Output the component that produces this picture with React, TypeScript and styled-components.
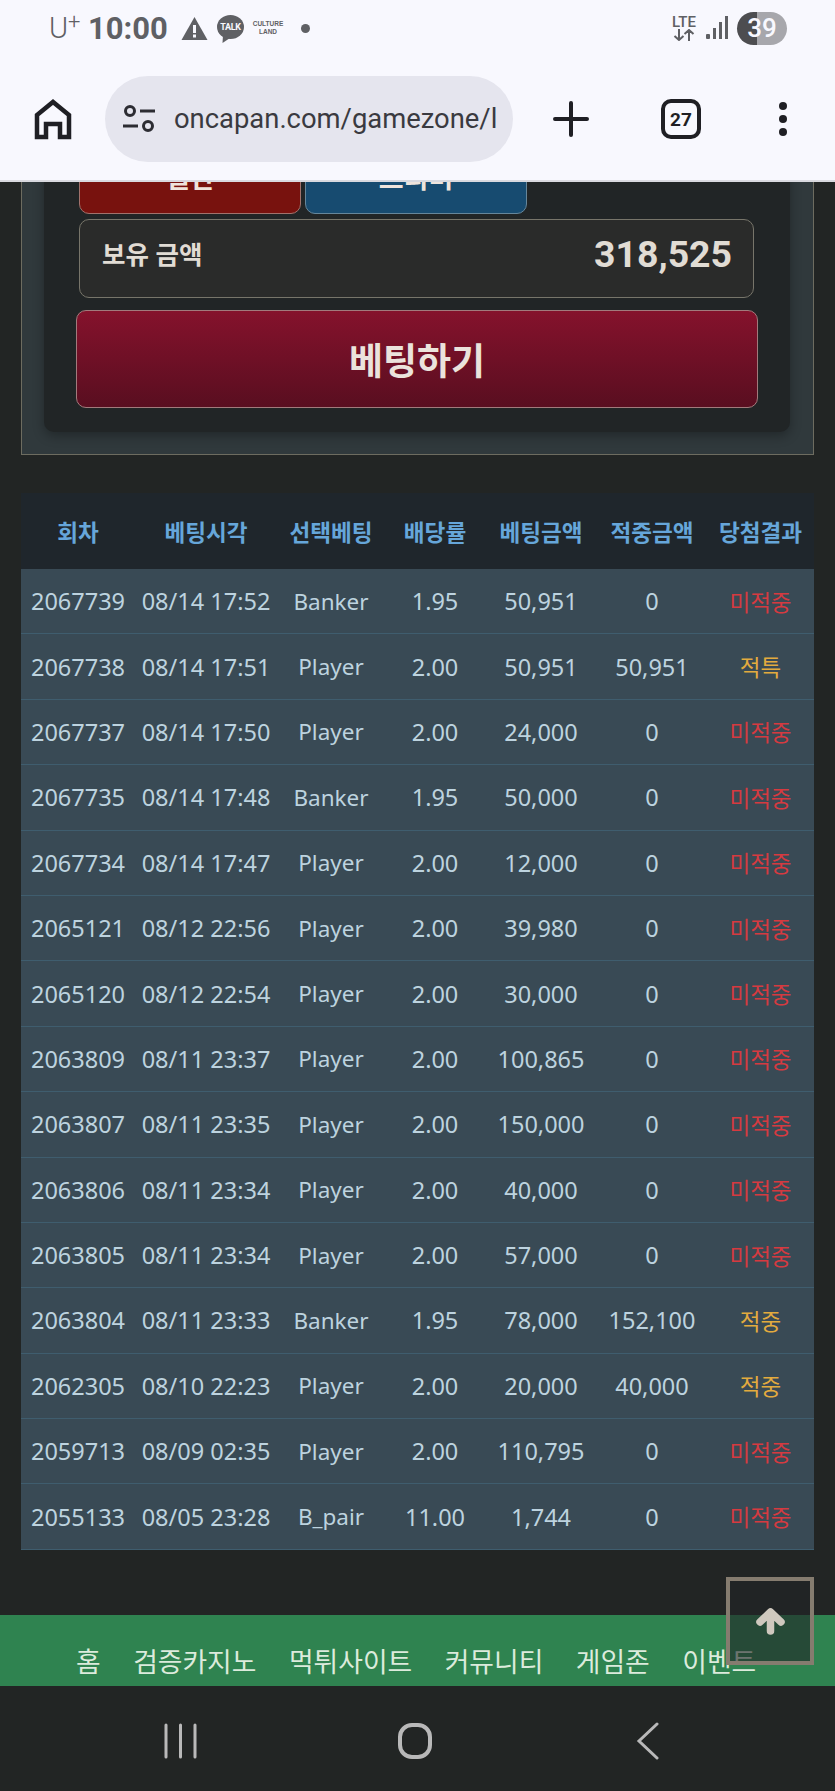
import styled, { createGlobalStyle } from 'styled-components';

const COLUMNS = '114px 142px 108px 100px 112px 110px 107px';
const KR_FONT = '"Noto Sans", "Noto Sans CJK KR", sans-serif';

const GlobalStyle = createGlobalStyle`
  * {
    box-sizing: border-box;
  }
  html, body {
    margin: 0;
    padding: 0;
    background: #222524;
  }
`;

const Screen = styled.div`
  position: relative;
  width: 835px;
  height: 1791px;
  overflow: hidden;
  display: flex;
  flex-direction: column;
  font-family: ${KR_FONT};
  background: #222524;
`;

const StatusBar = styled.div`
  height: 56px;
  flex: none;
  display: flex;
  align-items: center;
  padding: 0 48px 0 49px;
  background: #f8f8fe;
  color: #5f6064;
`;

const Carrier = styled.span`
  font-family: Roboto, sans-serif;
  font-size: 29px;
  font-weight: 300;
  width: 39px;
  > sup {
    font-size: 22px;
    line-height: 0;
    vertical-align: 9px;
  }
`;

const Clock = styled.span`
  font-family: Roboto, sans-serif;
  font-size: 31px;
  font-weight: 700;
  width: 93px;
`;

const TalkBubble = styled.div`
  position: relative;
  width: 27px;
  height: 27px;
  margin-left: 9px;
  display: flex;
  align-items: center;
  justify-content: center;
  > svg {
    position: absolute;
    inset: 0;
  }
  > span {
    position: relative;
    font-family: Roboto, sans-serif;
    font-size: 9px;
    font-weight: 700;
    color: #f8f8fe;
    margin-top: -2px;
    letter-spacing: -0.3px;
  }
`;

const CultureLand = styled.div`
  width: 32px;
  margin-left: 8px;
  text-align: center;
  font-family: "Liberation Sans", sans-serif;
  font-size: 6.5px;
  font-weight: 700;
  line-height: 8px;
  white-space: nowrap;
`;

const NoticeDot = styled.span`
  width: 9px;
  height: 9px;
  margin-left: 17px;
  border-radius: 50%;
  background: #5f6064;
`;

const StatusRight = styled.div`
  margin-left: auto;
  display: flex;
  align-items: center;
`;

const NetworkType = styled.div`
  width: 26px;
  margin-right: 9px;
  display: flex;
  flex-direction: column;
  align-items: center;
  font-family: Roboto, sans-serif;
  font-size: 15px;
  font-weight: 500;
  line-height: 14px;
`;

const Battery = styled.div`
  width: 50px;
  height: 33px;
  margin-left: 9px;
  border-radius: 17px;
  display: flex;
  align-items: center;
  justify-content: center;
  background: linear-gradient(90deg, #4d4d50 0 40%, #a7a7ac 40% 100%);
  font-family: Roboto, sans-serif;
  font-size: 26px;
  font-weight: 500;
  color: #f8f8fe;
`;

const BrowserBar = styled.div`
  height: 126px;
  flex: none;
  display: flex;
  align-items: center;
  padding: 2px 0 0 34px;
  background: #f8f8fe;
  border-bottom: 2px solid #d9d9df;
  color: #1f1f24;
`;

const UrlPill = styled.div`
  width: 408px;
  height: 86px;
  margin-left: 33px;
  margin-right: 40px;
  padding: 0 16px 0 18px;
  border-radius: 43px;
  display: flex;
  align-items: center;
  gap: 19px;
  background: #e5e5ee;
`;

const UrlText = styled.div`
  flex: 1;
  overflow: hidden;
  white-space: nowrap;
  font-family: Roboto, sans-serif;
  font-size: 27.4px;
  color: #3a3a40;
`;

const TabCount = styled.div`
  width: 40px;
  height: 40px;
  margin-left: 72px;
  margin-right: 78px;
  border: 4px solid #1f1f24;
  border-radius: 10px;
  display: flex;
  align-items: center;
  justify-content: center;
  font-family: Roboto, sans-serif;
  font-size: 19px;
  font-weight: 700;
`;

const MenuDots = styled.div`
  display: flex;
  flex-direction: column;
  gap: 5px;
  > span {
    width: 8px;
    height: 8px;
    border-radius: 50%;
    background: #1f1f24;
  }
`;

const Main = styled.div`
  flex: 1;
  min-height: 0;
  overflow: hidden;
  padding: 0 21px;
`;

const BetSection = styled.section`
  margin-top: -85px;
  padding: 20px 23px 22px 22px;
  border: 1px solid #6d6c60;
  background: #30393c;
`;

const BetPanel = styled.div`
  padding: 20px 35px 24px;
  border-radius: 10px;
  background: #212526;
  box-shadow: 0 4px 12px rgba(0, 0, 0, 0.3);
`;

const ChoiceRow = styled.div`
  display: grid;
  grid-template-columns: repeat(3, 222px);
  gap: 4px;
  margin-bottom: 5px;
`;

const ChoiceButton = styled.div<{ $tone: 'red' | 'blue' }>`
  height: 76px;
  border: 1px solid ${(p) => (p.$tone === 'red' ? '#a1726c' : '#66869a')};
  border-radius: 10px;
  display: flex;
  align-items: center;
  justify-content: center;
  background: ${(p) => (p.$tone === 'red' ? '#78120e' : '#174b70')};
  color: #efe4dc;
  font-size: 27px;
  font-weight: 700;
`;

const BalanceBox = styled.div`
  height: 79px;
  margin-right: 1px;
  padding: 12px 21px 0 22px;
  border: 1px solid #77756a;
  border-radius: 10px;
  display: flex;
  justify-content: space-between;
  background: #2a2b2a;
  color: #e1dcd4;
`;

const BalanceLabel = styled.span`
  margin-top: 4px;
  font-size: 25.5px;
  font-weight: 700;
  line-height: 36px;
`;

const BalanceValue = styled.span`
  font-family: Roboto, sans-serif;
  font-size: 37.4px;
  font-weight: 700;
  line-height: 44px;
`;

const BetButton = styled.div`
  height: 98px;
  margin: 12px -3px 0;
  border: 1px solid #a27a7c;
  border-radius: 10px;
  display: flex;
  align-items: center;
  justify-content: center;
  background: linear-gradient(180deg, #85122c, #590e20);
  color: #ebe3dc;
  font-size: 37px;
  font-weight: 700;
`;

const HistoryTable = styled.div`
  margin-top: 38px;
`;

const HeadRow = styled.div`
  height: 76px;
  display: grid;
  grid-template-columns: ${COLUMNS};
  align-items: center;
  background: #1f262c;
  color: #66a6da;
  font-size: 22.6px;
  font-weight: 700;
  text-align: center;
`;

const DataRow = styled.div`
  height: 65.4px;
  display: grid;
  grid-template-columns: ${COLUMNS};
  align-items: center;
  border-bottom: 1px solid #3f5d6e;
  background: #394a55;
  color: #bdd3df;
  font-size: 23.5px;
  text-align: center;
  white-space: nowrap;
`;

const PickCell = styled.span`
  font-size: 22.5px;
`;

const ResultCell = styled.span<{ $won: boolean }>`
  font-size: 22.5px;
  color: ${(p) => (p.$won ? '#e3ab3e' : '#d63a40')};
`;

const FooterMenu = styled.nav`
  height: 71px;
  flex: none;
  padding: 23px 0 0 76px;
  display: flex;
  gap: 32.5px;
  background: #2f8350;
  color: #dcebdc;
  font-size: 26.8px;
  line-height: 48px;
  white-space: nowrap;
  overflow: hidden;
`;

const SystemNav = styled.div`
  height: 105px;
  flex: none;
  padding: 5px 175px 0 163px;
  display: grid;
  grid-template-columns: 34px 36px 24px;
  justify-content: space-between;
  align-items: center;
  background: #222524;
`;

const HomeKey = styled.svg`
  margin-left: -2px;
`;

const TopButton = styled.div`
  position: absolute;
  left: 726px;
  top: 1577px;
  width: 88px;
  height: 88px;
  border: 4px solid #857c6f;
  display: flex;
  align-items: center;
  justify-content: center;
  background: rgba(33, 37, 38, 0.6);
`;

const HISTORY = [
  ['2067739', '08/14 17:52', 'Banker', '1.95', '50,951', '0', '미적중'],
  ['2067738', '08/14 17:51', 'Player', '2.00', '50,951', '50,951', '적특'],
  ['2067737', '08/14 17:50', 'Player', '2.00', '24,000', '0', '미적중'],
  ['2067735', '08/14 17:48', 'Banker', '1.95', '50,000', '0', '미적중'],
  ['2067734', '08/14 17:47', 'Player', '2.00', '12,000', '0', '미적중'],
  ['2065121', '08/12 22:56', 'Player', '2.00', '39,980', '0', '미적중'],
  ['2065120', '08/12 22:54', 'Player', '2.00', '30,000', '0', '미적중'],
  ['2063809', '08/11 23:37', 'Player', '2.00', '100,865', '0', '미적중'],
  ['2063807', '08/11 23:35', 'Player', '2.00', '150,000', '0', '미적중'],
  ['2063806', '08/11 23:34', 'Player', '2.00', '40,000', '0', '미적중'],
  ['2063805', '08/11 23:34', 'Player', '2.00', '57,000', '0', '미적중'],
  ['2063804', '08/11 23:33', 'Banker', '1.95', '78,000', '152,100', '적중'],
  ['2062305', '08/10 22:23', 'Player', '2.00', '20,000', '40,000', '적중'],
  ['2059713', '08/09 02:35', 'Player', '2.00', '110,795', '0', '미적중'],
  ['2055133', '08/05 23:28', 'B_pair', '11.00', '1,744', '0', '미적중'],
];

const HEADERS = ['회차', '베팅시각', '선택베팅', '배당률', '베팅금액', '적중금액', '당첨결과'];
const MENU = ['홈', '검증카지노', '먹튀사이트', '커뮤니티', '게임존', '이벤트'];

function App() {
  return (
    <Screen>
      <GlobalStyle />
      <StatusBar>
        <Carrier>
          U<sup>+</sup>
        </Carrier>
        <Clock>10:00</Clock>
        <svg width="27" height="24" viewBox="0 0 27 24">
          <path d="M13.5 1 26.5 24H.5Z" fill="#5f6064" />
          <path d="M12 9h3v8h-3zM12 18.5h3v3h-3z" fill="#f8f8fe" />
        </svg>
        <TalkBubble>
          <svg width="27" height="29" viewBox="0 0 27 29">
            <ellipse cx="13.5" cy="12" rx="13.5" ry="12" fill="#5f6064" />
            <path d="M6 20 5.500 28 13 23Z" fill="#5f6064" />
          </svg>
          <span>TALK</span>
        </TalkBubble>
        <CultureLand>
          CULTURE
          <br />
          LAND
        </CultureLand>
        <NoticeDot />
        <StatusRight>
          <NetworkType>
            LTE
            <svg width="22" height="12" viewBox="0 0 22 12" fill="none" stroke="#5f6064" strokeWidth="2">
              <path d="M6 0v11M1.500 7 6 11l4.500-4M16 12V1M11.500 5 16 1l4.500 4" />
            </svg>
          </NetworkType>
          <svg width="22" height="24" viewBox="0 0 22 24" fill="#5f6064">
            <rect x="0" y="18" width="4" height="5" rx="1" />
            <rect x="7" y="12" width="3" height="11" />
            <rect x="13" y="6" width="3" height="17" />
            <rect x="19" y="0" width="3" height="23" />
          </svg>
          <Battery>39</Battery>
        </StatusRight>
      </StatusBar>

      <BrowserBar>
        <svg width="38" height="41" viewBox="0 0 38 41" fill="none" stroke="#1f1f24" strokeWidth="4.500">
          <path d="M3 38V16L19 3l16 13v22h-9V25H12v13Z" />
        </svg>
        <UrlPill>
          <svg width="32" height="28" viewBox="0 0 32 28" fill="none" stroke="#2c2c32" strokeWidth="3">
            <circle cx="7" cy="6" r="4.500" />
            <circle cx="25" cy="21" r="4.500" />
            <path d="M17 6h15M0 21h15" />
          </svg>
          <UrlText>oncapan.com/gamezone/list</UrlText>
        </UrlPill>
        <svg width="36" height="36" viewBox="0 0 36 36" stroke="#1f1f24" strokeWidth="4" strokeLinecap="round">
          <path d="M18 2v32M2 18h32" />
        </svg>
        <TabCount>27</TabCount>
        <MenuDots>
          <span />
          <span />
          <span />
        </MenuDots>
      </BrowserBar>

      <Main>
        <BetSection>
          <BetPanel>
            <ChoiceRow>
              <ChoiceButton $tone="red">일반</ChoiceButton>
              <ChoiceButton $tone="blue">프리미</ChoiceButton>
            </ChoiceRow>
            <BalanceBox>
              <BalanceLabel>보유 금액</BalanceLabel>
              <BalanceValue>318,525</BalanceValue>
            </BalanceBox>
            <BetButton>베팅하기</BetButton>
          </BetPanel>
        </BetSection>

        <HistoryTable>
          <HeadRow>
            {HEADERS.map((title) => (
              <span key={title}>{title}</span>
            ))}
          </HeadRow>
          {HISTORY.map((row) => (
            <DataRow key={row[0]}>
              <span>{row[0]}</span>
              <span>{row[1]}</span>
              <PickCell>{row[2]}</PickCell>
              <span>{row[3]}</span>
              <span>{row[4]}</span>
              <span>{row[5]}</span>
              <ResultCell $won={row[6] !== '미적중'}>{row[6]}</ResultCell>
            </DataRow>
          ))}
        </HistoryTable>
      </Main>

      <FooterMenu>
        {MENU.map((item) => (
          <span key={item}>{item}</span>
        ))}
      </FooterMenu>

      <SystemNav>
        <svg width="34" height="36" viewBox="0 0 34 36" stroke="#b9b9b9" strokeWidth="3" strokeLinecap="round">
          <path d="M3 2v32M17.500 2v32M32 2v32" />
        </svg>
        <HomeKey width="36" height="38" viewBox="0 0 36 38" fill="none" stroke="#b9b9b9" strokeWidth="4">
          <rect x="3" y="3" width="30" height="32" rx="12" />
        </HomeKey>
        <svg width="24" height="38" viewBox="0 0 24 38" fill="none" stroke="#b9b9b9" strokeWidth="3" strokeLinecap="round">
          <path d="M21 2 3 19l18 17" />
        </svg>
      </SystemNav>

      <TopButton>
        <svg width="29" height="27" viewBox="0 0 29 27" fill="none" stroke="#cfc8be" strokeWidth="7.500" strokeLinecap="round" strokeLinejoin="round">
          <path d="M14.500 23V5M4 14 14.500 4 25 14" />
        </svg>
      </TopButton>
    </Screen>
  );
}

export default App;
